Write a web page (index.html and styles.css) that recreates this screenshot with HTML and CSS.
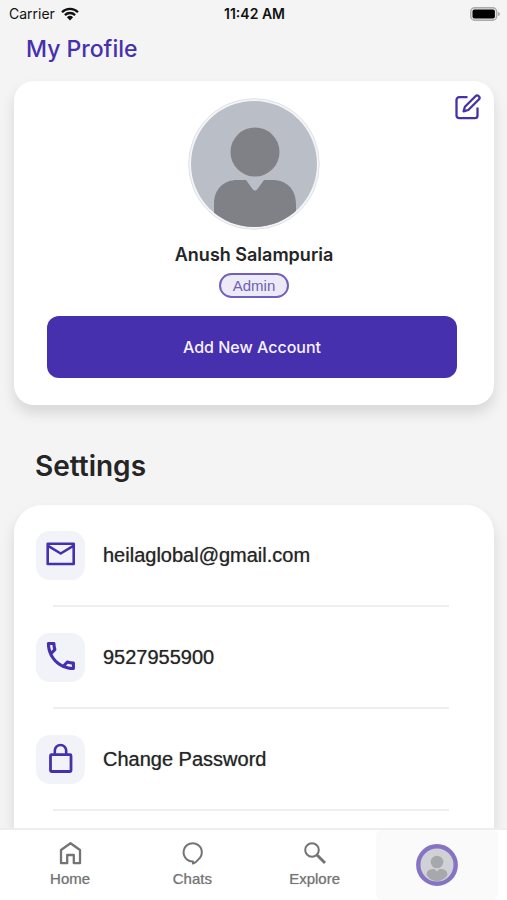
FILE: index.html
```html
<!DOCTYPE html>
<html lang="en">
<head>
<meta charset="utf-8">
<meta name="viewport" content="width=device-width, initial-scale=1">
<title>My Profile</title>
<link rel="stylesheet" href="styles.css">
</head>
<body>
<div class="app">
  <div class="status">
    <div class="carrier">
      <span>Carrier</span>
      <svg class="wifi" viewBox="0 0 18 14" aria-hidden="true"><path d="M1 5.2a11.4 11.4 0 0 1 16 0M3.9 8.1a7.2 7.2 0 0 1 10.2 0" fill="none" stroke="currentColor" stroke-width="2.3"/><path d="M5.9 10.3a4.5 4.5 0 0 1 6.2 0L9 13.5z" fill="currentColor"/></svg>
    </div>
    <span class="time">11:42 AM</span>
    <svg class="battery" viewBox="0 0 30 14" aria-hidden="true"><rect x="0.7" y="0.7" width="26" height="12.6" rx="4" fill="#e4e4e4" stroke="#aaa" stroke-width="1.4"/><rect x="2.5" y="2.5" width="22.4" height="9" rx="2" fill="#000"/><path d="M28 4.7q2 .7 2 2.3t-2 2.3z" fill="#aaa"/></svg>
  </div>
  <main class="content">
    <h1 class="page-title">My Profile</h1>
    <section class="card profile">
      <button class="edit" type="button" aria-label="Edit profile">
        <svg viewBox="0 0 26 26" aria-hidden="true"><path d="M12.500 3.200H4.200A2.700 2.700 0 0 0 1.500 5.900v15.600a2.700 2.700 0 0 0 2.700 2.700h15.600a2.700 2.700 0 0 0 2.700-2.700V13.500M20.500 2.200a2.300 2.300 0 0 1 3.300 3.300L13.300 16l-4.700 1.300L9.900 12.700z" fill="none" stroke="currentColor" stroke-width="2.300" stroke-linejoin="round" stroke-linecap="butt"/></svg>
      </button>
      <svg class="avatar" viewBox="0 0 132 132" role="img" aria-label="Profile picture">
        <defs><clipPath id="avatar-clip"><circle cx="66" cy="66" r="63"/></clipPath></defs>
        <circle cx="66" cy="66" r="65.300" fill="#f4f5f8" stroke="#dfe0e5" stroke-width="1"/>
        <circle cx="66" cy="66" r="63" fill="#babec7"/>
        <g clip-path="url(#avatar-clip)" fill="#808186"><circle cx="67" cy="54" r="24.500"/><path d="M26 132V106C26 90 37 82 49 82h9l6.500 9q2.500 3 5 0l6.500-9h9c12 0 23 8 23 24v26z"/></g>
      </svg>
      <h2 class="name">Anush Salampuria</h2>
      <span class="role">Admin</span>
      <button class="primary" type="button">Add New Account</button>
    </section>
    <h2 class="section-title">Settings</h2>
    <ul class="card settings">
      <li><a class="row" href="#email">
        <span class="tile"><svg viewBox="0 0 36 36" aria-hidden="true"><path d="M4.700 6.700h26v20.300h-26zM4.700 8.700 17.700 16.500 30.700 8.700" fill="none" stroke="currentColor" stroke-width="2.600" stroke-linejoin="round"/></svg></span>
        <span>heilaglobal@gmail.com</span></a></li>
      <li><a class="row" href="#phone">
        <span class="tile"><svg viewBox="0 0 36 36" aria-hidden="true"><path transform="translate(-.800 -1.700) scale(1.560)" d="M6.540 5c.06.890.21 1.760.45 2.590l-1.200 1.200c-.41-1.200-.67-2.470-.76-3.790h1.510m9.860 12.020c.85.240 1.720.39 2.600.45v1.490c-1.320-.09-2.590-.35-3.800-.75l1.200-1.190M7.500 3H4c-.55 0-1 .45-1 1 0 9.390 7.610 17 17 17 .55 0 1-.45 1-1v-3.490c0-.55-.45-1-1-1-1.240 0-2.450-.2-3.570-.57-.1-.04-.21-.05-.31-.05-.26 0-.51.100-.71.290l-2.200 2.200c-2.830-1.450-5.150-3.760-6.590-6.590l2.200-2.200c.28-.28.360-.67.250-1.020C8.700 6.450 8.500 5.250 8.500 4c0-.55-.45-1-1-1z" fill="currentColor"/></svg></span>
        <span>9527955900</span></a></li>
      <li><a class="row" href="#password">
        <span class="tile"><svg viewBox="0 0 36 36" aria-hidden="true"><path d="M11.800 14V9.700a5.700 5.700 0 0 1 11.400 0V14" fill="none" stroke="currentColor" stroke-width="2.600"/><rect x="7.500" y="13.700" width="20.500" height="16.800" rx="1" fill="none" stroke="currentColor" stroke-width="2.800"/></svg></span>
        <span>Change Password</span></a></li>
    </ul>
  </main>
  <nav class="tabs" aria-label="Main">
    <a class="tab" href="#home"><svg viewBox="0 0 24 24" aria-hidden="true"><path d="M3 9 12.500 2.200 22 9v13.200h-6.200v-8.200H9.200v8.200H3z" fill="none" stroke="currentColor" stroke-width="2.300" stroke-linejoin="round"/></svg><span>Home</span></a>
    <a class="tab" href="#chats"><svg viewBox="0 0 24 24" aria-hidden="true"><path d="M13 20.400A9.100 9.100 0 1 1 18 18.700Q16.500 21 13 22.500z" fill="none" stroke="currentColor" stroke-width="2" stroke-linejoin="round"/></svg><span>Chats</span></a>
    <a class="tab" href="#explore"><svg viewBox="0 0 24 24" aria-hidden="true"><circle cx="9" cy="9" r="6.800" fill="none" stroke="currentColor" stroke-width="2"/><path d="m14 14 8 8" fill="none" stroke="currentColor" stroke-width="3"/></svg><span>Explore</span></a>
    <a class="tab current" href="#profile" aria-label="Profile" aria-current="page">
      <svg class="mini" viewBox="0 0 42 42" aria-hidden="true"><circle cx="21" cy="21" r="18.700" fill="#d0d1d6" stroke="#8673c4" stroke-width="4.400"/><g fill="#a7a8ac"><circle cx="21" cy="18" r="6.300"/><path d="M10.500 31q0-6 6.500-6h1.500l2.500 2.500L23.500 25H25q6.500 0 6.500 6-4 6-10.500 6t-10.500-6z"/></g></svg>
    </a>
  </nav>
</div>
</body>
</html>
```

FILE: styles.css
```css
* { box-sizing: border-box; }

:root {
  --purple: #4630ad;
  --ink: #252525;
  --grey: #747474;
}

body {
  margin: 0;
  background: #f4f4f4;
  color: var(--ink);
  font-family: "Liberation Sans", Arial, sans-serif;
}

h1, h2, ul { margin: 0; padding: 0; }
a { color: inherit; text-decoration: none; }
button { border: 0; font: inherit; cursor: pointer; }
svg { display: block; }

.app {
  display: flex;
  flex-direction: column;
  height: 100vh;
}

.status {
  display: grid;
  grid-template-columns: 1fr auto 1fr;
  align-items: center;
  flex: none;
  height: 27px;
  padding: 0 7px 0 9px;
  color: #111;
  font-family: Inter, sans-serif;
  font-size: 14px;
}
.carrier { display: flex; align-items: center; gap: 6px; }
.wifi { width: 18px; height: 14px; }
.time { font-weight: 600; }
.battery { width: 30px; height: 14px; justify-self: end; }

.content {
  display: flex;
  flex-direction: column;
  flex: 1;
  min-height: 0;
  padding: 0 13px 0 14px;
  overflow: auto;
  scrollbar-width: none;
}

.page-title {
  padding: 9px 12px 19px;
  color: var(--purple);
  font-family: Inter, sans-serif;
  font-size: 23px;
  font-weight: 500;
  line-height: 26px;
}

.card {
  flex: none;
  background: #fff;
  border-radius: 20px;
  box-shadow: 0 8px 14px rgba(0, 0, 0, 0.12);
}

.profile {
  position: relative;
  display: flex;
  flex-direction: column;
  align-items: center;
  padding: 17px 33px 27px;
}
.edit {
  position: absolute;
  top: 13px;
  right: 13px;
  padding: 0;
  background: none;
  color: var(--purple);
}
.edit svg { width: 26px; height: 26px; }
.avatar { width: 132px; height: 132px; }
.name {
  margin: 13px 0 6px;
  font-family: Inter, sans-serif;
  font-size: 18px;
  font-weight: 600;
  line-height: 24px;
}
.role {
  padding: 0 12px;
  border: 2px solid #6f60c0;
  border-radius: 13px;
  background: #eceaf6;
  color: #6e60b8;
  font-size: 15px;
  line-height: 21px;
}
.primary {
  align-self: stretch;
  height: 62px;
  margin: 18px 4px 0 0;
  border-radius: 12px;
  background: #4730ae;
  color: #f5f2ff;
  font-family: Inter, sans-serif;
  font-size: 16px;
  font-weight: 500;
}

.section-title {
  padding: 44px 21px 22px;
  font-family: Inter, sans-serif;
  font-size: 28px;
  font-weight: 600;
  line-height: 34px;
}

.settings {
  flex: 1 0 auto;
  padding: 0 45px 0 22px;
  border-radius: 28px 28px 0 0;
  list-style: none;
}
.row {
  display: flex;
  align-items: center;
  gap: 18px;
  height: 100px;
  font-size: 20px;
  text-shadow: 0 0 1px rgba(37, 37, 37, 0.6);
}
.settings li::after {
  content: "";
  display: block;
  height: 2px;
  margin-left: 17px;
  background: #eee;
}
.tile {
  display: grid;
  place-items: center;
  width: 49px;
  height: 49px;
  border-radius: 14px;
  background: #f2f3f8;
  color: var(--purple);
}
.tile svg { width: 36px; height: 36px; }

.tabs {
  display: grid;
  grid-template-columns: repeat(4, 1fr);
  flex: none;
  position: relative;
  height: 72px;
  padding: 0 9px;
  border-top: 2px solid #eee;
  background: #fff;
  color: var(--grey);
}
.tab {
  display: flex;
  flex-direction: column;
  align-items: center;
  gap: 4px;
  padding-top: 11px;
  font-size: 15px;
  line-height: 20px;
  text-shadow: 0 0 1px rgba(116, 116, 116, 0.6);
}
.tab svg { width: 24px; height: 24px; }
.current {
  padding-top: 14px;
  border-radius: 6px;
  background: #fafafa;
}
.tab .mini { width: 42px; height: 42px; }
```
